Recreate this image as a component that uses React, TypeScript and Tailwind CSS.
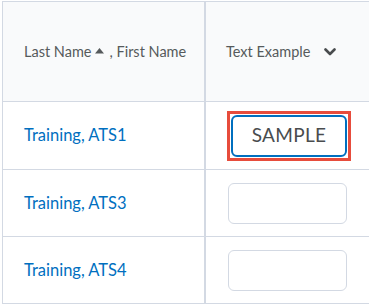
import React from 'react';

const rows = [
  { name: 'Training, ATS1', value: 'SAMPLE', focused: true },
  { name: 'Training, ATS3', value: '', focused: false },
  { name: 'Training, ATS4', value: '', focused: false },
];

export default function App() {
  return (
    <div className="w-[369px] h-[304px] overflow-hidden bg-white pt-[1px] pl-[2px] font-['Lato','Liberation_Sans',sans-serif]">
      <div className="grid grid-cols-[203px_1fr] w-[400px] border-t border-l border-[#d3d9e3]">
        {/* header */}
        <div className="h-[100px] bg-[#f9fafb] border-r-2 border-b border-[#d3d9e3] flex items-center pl-[21px] text-[14.5px] text-[#565a5c]">
          <span>Last Name</span>
          <svg width="9" height="7" viewBox="0 0 9 7" className="ml-[4px] mr-[5px] mt-[-2px]">
            <path d="M0 6.5 L4.5 1 L9 6.5 Z" fill="#565a5c" />
          </svg>
          <span>, First Name</span>
        </div>
        <div className="h-[100px] bg-[#f9fafb] border-b border-[#d3d9e3] flex items-center pl-[20px] text-[14.5px] text-[#565a5c]">
          <span>Text Example</span>
          <svg width="12" height="8" viewBox="0 0 12 8" className="ml-[14px] mt-[1px]">
            <path d="M1.5 1.5 L6 6 L10.5 1.5" fill="none" stroke="#494c4e" strokeWidth="2.6" strokeLinecap="round" strokeLinejoin="round" />
          </svg>
        </div>

        {rows.map((r, i) => (
          <React.Fragment key={r.name}>
            <div className={`${i === 0 ? 'h-[68px]' : 'h-[67px]'} border-r-2 border-b border-[#d3d9e3] flex items-center pl-[21px] text-[16.5px] text-[#006fbf]`}>
              {r.name}
            </div>
            <div className={`${i === 0 ? 'h-[68px]' : 'h-[67px]'} border-b border-[#d3d9e3] flex items-center pl-[21px]`}>
              {r.focused ? (
                <div className="border-[3px] border-[#e74c3c] p-[1px]">
                  <div className="w-[116px] h-[42px] rounded-[6px] border-2 border-[#006fbf] flex items-center justify-center text-[19px] text-[#494c4e] tracking-[0.3px]">
                    {r.value}
                  </div>
                </div>
              ) : (
                <div className="ml-[1px] w-[119px] h-[41px] rounded-[6px] border border-[#d3d9e3] bg-white" />
              )}
            </div>
          </React.Fragment>
        ))}
      </div>
    </div>
  );
}
